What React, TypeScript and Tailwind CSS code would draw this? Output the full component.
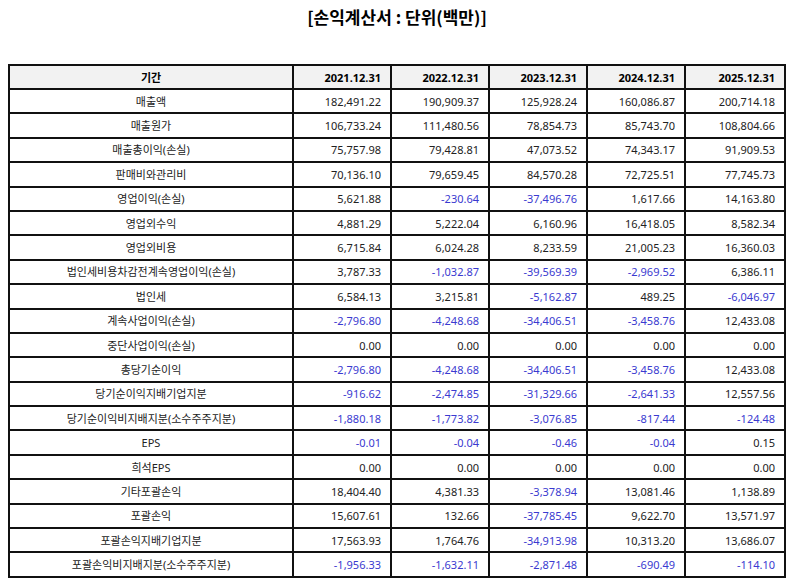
import React from "react";

const cols = ["2021.12.31", "2022.12.31", "2023.12.31", "2024.12.31", "2025.12.31"];

const rows: [string, string[]][] = [
  ["매출액", ["182,491.22", "190,909.37", "125,928.24", "160,086.87", "200,714.18"]],
  ["매출원가", ["106,733.24", "111,480.56", "78,854.73", "85,743.70", "108,804.66"]],
  ["매출총이익(손실)", ["75,757.98", "79,428.81", "47,073.52", "74,343.17", "91,909.53"]],
  ["판매비와관리비", ["70,136.10", "79,659.45", "84,570.28", "72,725.51", "77,745.73"]],
  ["영업이익(손실)", ["5,621.88", "-230.64", "-37,496.76", "1,617.66", "14,163.80"]],
  ["영업외수익", ["4,881.29", "5,222.04", "6,160.96", "16,418.05", "8,582.34"]],
  ["영업외비용", ["6,715.84", "6,024.28", "8,233.59", "21,005.23", "16,360.03"]],
  ["법인세비용차감전계속영업이익(손실)", ["3,787.33", "-1,032.87", "-39,569.39", "-2,969.52", "6,386.11"]],
  ["법인세", ["6,584.13", "3,215.81", "-5,162.87", "489.25", "-6,046.97"]],
  ["계속사업이익(손실)", ["-2,796.80", "-4,248.68", "-34,406.51", "-3,458.76", "12,433.08"]],
  ["중단사업이익(손실)", ["0.00", "0.00", "0.00", "0.00", "0.00"]],
  ["총당기순이익", ["-2,796.80", "-4,248.68", "-34,406.51", "-3,458.76", "12,433.08"]],
  ["당기순이익지배기업지분", ["-916.62", "-2,474.85", "-31,329.66", "-2,641.33", "12,557.56"]],
  ["당기순이익비지배지분(소수주주지분)", ["-1,880.18", "-1,773.82", "-3,076.85", "-817.44", "-124.48"]],
  ["EPS", ["-0.01", "-0.04", "-0.46", "-0.04", "0.15"]],
  ["희석EPS", ["0.00", "0.00", "0.00", "0.00", "0.00"]],
  ["기타포괄손익", ["18,404.40", "4,381.33", "-3,378.94", "13,081.46", "1,138.89"]],
  ["포괄손익", ["15,607.61", "132.66", "-37,785.45", "9,622.70", "13,571.97"]],
  ["포괄손익지배기업지분", ["17,563.93", "1,764.76", "-34,913.98", "10,313.20", "13,686.07"]],
  ["포괄손익비지배지분(소수주주지분)", ["-1,956.33", "-1,632.11", "-2,871.48", "-690.49", "-114.10"]],
];

export default function App() {
  return (
    <div
      className="w-[794px] h-[586px] bg-white text-black flex flex-col items-center"
      style={{ fontFamily: '"Noto Sans", "Noto Sans CJK KR", sans-serif' }}
    >
      <div className="h-[36px] pt-[5px] text-[17px] font-bold leading-[24px]" style={{ fontFamily: '"Noto Sans CJK KR", sans-serif' }}>
        [손익계산서 : 단위(백만)]
      </div>
      <table className="mt-[28px] border-collapse table-fixed w-[776px] text-[11px] leading-none">
        <colgroup>
          <col className="w-[284px]" />
          <col className="w-[98px]" />
          <col className="w-[98px]" />
          <col className="w-[98px]" />
          <col className="w-[98px]" />
          <col className="w-[100px]" />
        </colgroup>
        <thead>
          <tr className="h-[24px] bg-[#f2f2f2]">
            <th className="border-2 border-[#111] font-bold text-center">기간</th>
            {cols.map((c) => (
              <th key={c} className="border-2 border-[#111] font-bold text-right pr-[9px]">
                {c}
              </th>
            ))}
          </tr>
        </thead>
        <tbody>
          {rows.map(([label, vals]) => (
            <tr key={label} className="h-[24.4px]">
              <td className="border-2 border-[#111] text-center text-[#222]">{label}</td>
              {vals.map((v, i) => (
                <td
                  key={i}
                  className={
                    v.startsWith("-")
                      ? "border-2 border-[#111] text-right pr-[9px] text-[#3a3ad0]"
                      : "border-2 border-[#111] text-right pr-[9px] text-[#222]"
                  }
                >
                  {v}
                </td>
              ))}
            </tr>
          ))}
        </tbody>
      </table>
    </div>
  );
}
